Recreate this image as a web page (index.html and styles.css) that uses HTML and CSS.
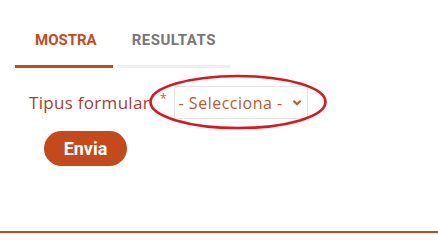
FILE: index.html
```html
<!DOCTYPE html>
<html lang="ca">
<head>
<meta charset="utf-8">
<title>Mostra</title>
<link rel="stylesheet" href="styles.css">
</head>
<body>
<div class="page">
  <nav class="tabs">
    <a class="tab active">MOSTRA</a>
    <a class="tab">RESULTATS</a>
  </nav>
  <form class="form">
    <div class="field">
      <label class="label">Tipus formular</label>
      <span class="req">*</span>
      <div class="select">
        <span class="select-text">- Selecciona -</span>
        <svg class="chev" width="8" height="6" viewBox="0 0 8 6"><path d="M1 1.2 L4 4.3 L7 1.2" fill="none" stroke="#c0572c" stroke-width="2" stroke-linecap="round" stroke-linejoin="round"/></svg>
        <svg class="circle" width="180" height="58" viewBox="0 0 180 58"><ellipse cx="90" cy="29" rx="87.5" ry="26" fill="none" stroke="#e0141e" stroke-width="2.6"/></svg>
      </div>
    </div>
    <button type="button" class="btn">Envia</button>
  </form>
</div>
<div class="footer-line"></div>
</body>
</html>
```
FILE: styles.css
```css
html, body {
  margin: 0;
  padding: 0;
  background: #fff;
}
.page {
  height: 231px;
  padding: 0 0 0 15px;
  box-sizing: border-box;
  font-family: "Open Sans", sans-serif;
}
.tabs {
  display: flex;
  gap: 4px;
  padding-top: 28px;
}
.tab {
  display: block;
  font-family: Roboto, "Liberation Sans", sans-serif;
  font-weight: 700;
  font-size: 15px;
  line-height: 20px;
  color: #777;
  padding: 2px 14px 15px 15px;
  border-bottom: 3px solid #eeeeee;
  letter-spacing: 0.5px;
}
.tab.active {
  color: #c44a1e;
  border-bottom-color: #c44a1e;
  padding-left: 20px;
  padding-right: 16px;
  letter-spacing: 0;
}
.form {
  padding-top: 18px;
  padding-left: 14px;
}
.field {
  display: flex;
  align-items: center;
  height: 33px;
}
.label {
  font-size: 17px;
  color: #a63d33;
  letter-spacing: 0.3px;
}
.req {
  color: #e0502a;
  font-size: 12px;
  margin: -9px 0 0 10px;
}
.select {
  position: relative;
  display: flex;
  align-items: center;
  height: 33px;
  box-sizing: border-box;
  margin-left: 7px;
  padding: 0 6px 0 4px;
  border: 1px solid #e4e4e4;
  border-radius: 3px;
  width: 134px;
}
.select-text {
  font-size: 16px;
  color: #c0572c;
  letter-spacing: 0.5px;
}
.chev {
  margin-left: auto;
  margin-top: 1px;
}
.circle {
  position: absolute;
  left: -27px;
  top: -14px;
}
.btn {
  display: block;
  margin: 12px 0 0 15px;
  width: 83px;
  height: 35px;
  border: none;
  border-radius: 18px;
  background: #c44a1c;
  color: #fff;
  font-family: Roboto, "Liberation Sans", sans-serif;
  font-weight: 700;
  font-size: 18px;
  padding: 0;
}
.footer-line {
  height: 2px;
  background: #c44a1c;
}
```
